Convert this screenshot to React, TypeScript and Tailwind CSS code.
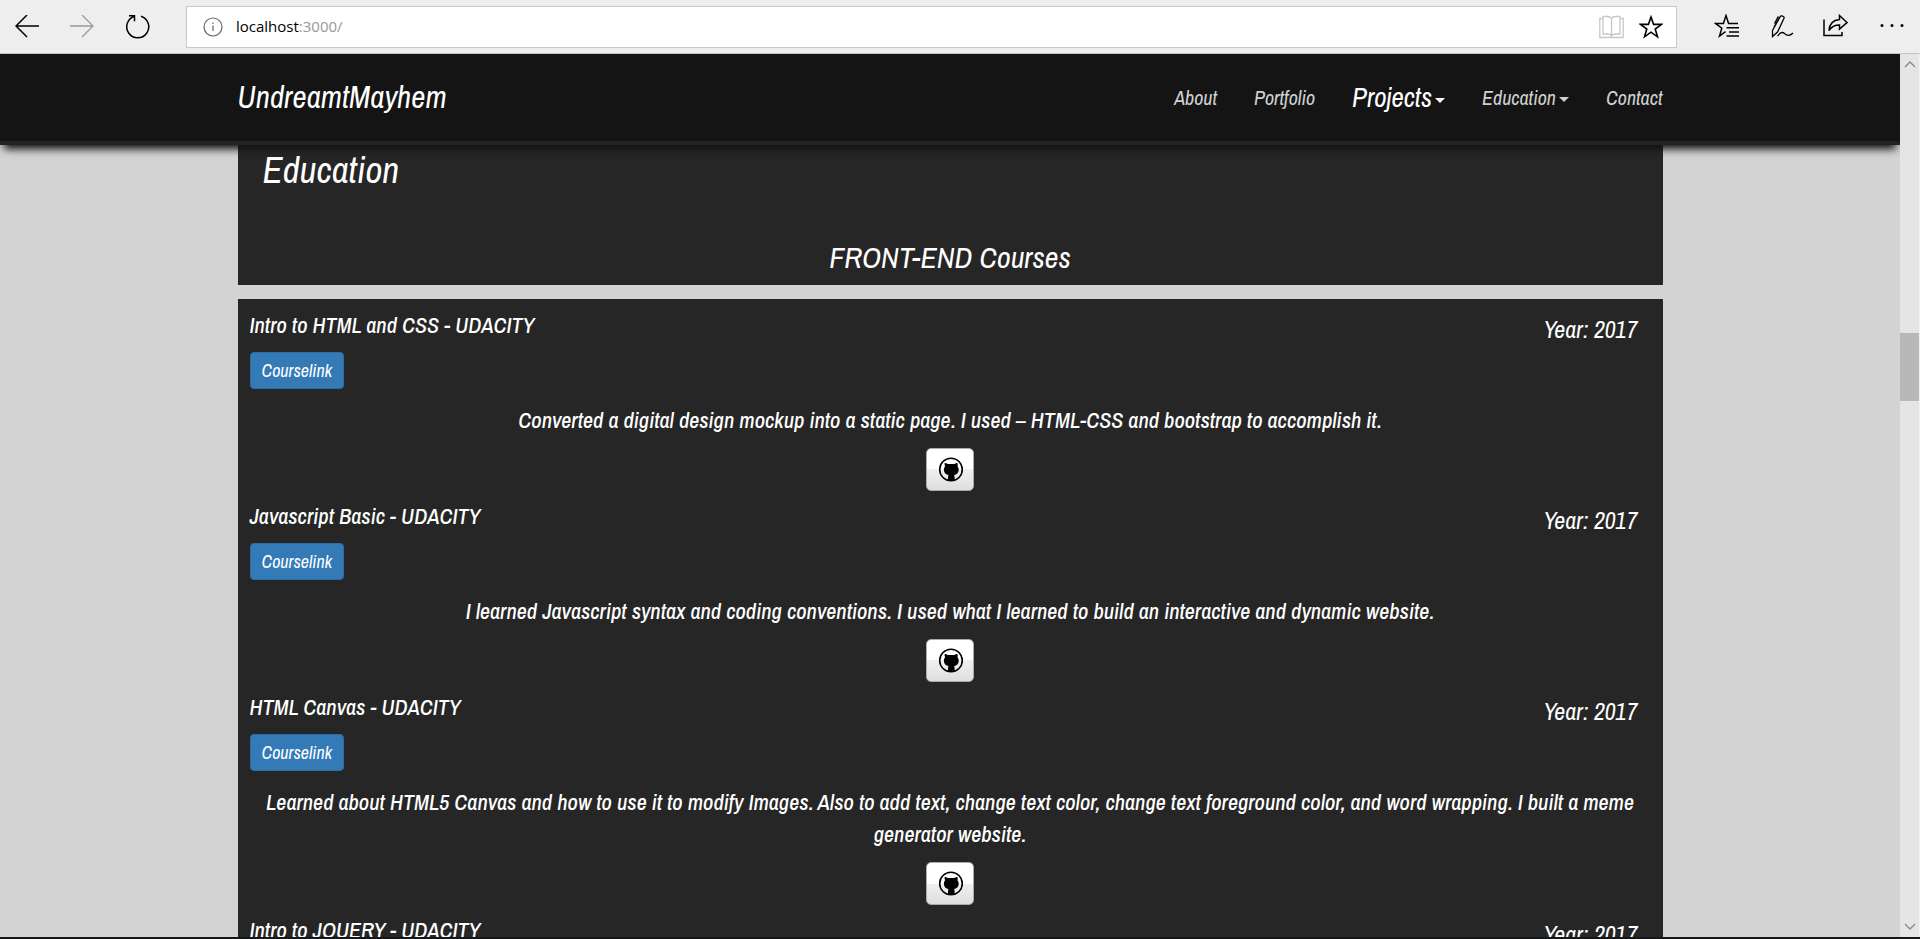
import React from "react";

const courses = [
  {
    title: "Intro to HTML and CSS - UDACITY",
    year: 2017,
    text: "Converted a digital design mockup into a static page. I used – HTML-CSS and bootstrap to accomplish it.",
  },
  {
    title: "Javascript Basic - UDACITY",
    year: 2017,
    text: "I learned Javascript syntax and coding conventions. I used what I learned to build an interactive and dynamic website.",
  },
  {
    title: "HTML Canvas - UDACITY",
    year: 2017,
    text: "Learned about HTML5 Canvas and how to use it to modify Images. Also to add text, change text color, change text foreground color, and word wrapping. I built a meme generator website.",
  },
  {
    title: "Intro to JQUERY - UDACITY",
    year: 2017,
    text: "",
  },
];

const line = { fill: "none", stroke: "currentColor" } as const;

function BrowserBar() {
  return (
    <header className="flex h-[54px] shrink-0 items-center border-b border-[#c3c3c3] bg-[#eeeeee] text-black">
      <button aria-label="Back" className="ml-[15px] size-6">
        <svg viewBox="0 0 24 24" {...line} strokeWidth="1.5"><path d="M24 11H1M12 0 1 11l11 11" /></svg>
      </button>
      <button aria-label="Forward" className="ml-[31px] size-6 text-[#999]">
        <svg viewBox="0 0 24 24" {...line} strokeWidth="1.3"><path d="M0 11h23M12 0l11 11-11 11" /></svg>
      </button>
      <button aria-label="Refresh" className="ml-8 size-6">
        <svg viewBox="0 0 24 24" {...line} strokeWidth="1.5"><path d="M15 1.300a11 11 0 1 1-6.500 0M3 .8h5.500v5.400" /></svg>
      </button>
      <div className="ml-9 flex h-[42px] flex-1 items-center border border-[#c8c8c8] bg-white">
        <svg className="ml-4 size-5 text-[#666]" viewBox="0 0 20 20" {...line} strokeWidth="1.2">
          <circle cx="10" cy="10" r="9" /><path d="M10 8.500V14M10 5.500V7" />
        </svg>
        <a href="#top" className="ml-[13px] flex-1 font-['Open_Sans',sans-serif] text-[15px] text-black">
          localhost<span className="text-[#999]">:3000/</span>
        </a>
        <button aria-label="Reading view" className="h-6 w-[25px] text-[#c8c8c8]">
          <svg viewBox="0 0 25 24" {...line} strokeWidth="1.3">
            <path d="M12.500 3.500Q11.500 1.500 8.500 1.500H4V19h4.500q3 0 4 2 1-2 4-2H21V1.500h-4.500q-3 0-4 2V21M4 3.500H.8V22.500h23.400V3.500H21" />
          </svg>
        </button>
        <button aria-label="Add to favorites" className="mr-[13px] ml-[15px] size-6">
          <svg viewBox="0 0 24 24" {...line} strokeWidth="1.6"><path d="m12 2 2.600 7.400H22.500L16.200 14l2.300 7.800L12 17.200l-6.500 4.600L7.800 14 1.500 9.400h7.900z" /></svg>
        </button>
      </div>
      <button aria-label="Favorites" className="ml-[37px] size-[25px]">
        <svg viewBox="0 0 25 25" {...line} strokeWidth="1.5">
          <path d="M24 9.400H14.600L12 1.500 9.400 9.400H1.500l6.300 4.800L5.500 22l6-4.300M12.500 13.800H25M15 18H25M12.500 22H25" />
        </svg>
      </button>
      <button aria-label="Add notes" className="ml-8 size-6">
        <svg viewBox="0 0 24 24" {...line} strokeWidth="1.300">
          <path d="M1.500 15.500 9 2c1-2 4.700-.8 4 1.300L6.500 17 1.500 21.500zM3 12l5.500-9.500L7 2 3.500 8.500M6.500 21c3-3.500 5-4.500 7-2.500s4.500 3.500 8.500-.5" />
        </svg>
      </button>
      <button aria-label="Share" className="ml-7 size-[25px]">
        <svg viewBox="0 0 25 25" {...line} strokeWidth="1.5">
          <path d="M1 5.500v16h18V18M16.500 1.500 24 8.500l-7.500 6.500v-4c-5 0-8 1.500-10.500 5.500C6.500 9.500 10.500 6 16.500 5.500z" />
        </svg>
      </button>
      <button aria-label="More" className="mr-4 ml-8 size-6">
        <svg viewBox="0 0 24 24" fill="currentColor"><circle cx="2" cy="10.500" r="1.500" /><circle cx="12" cy="10.500" r="1.500" /><circle cx="22" cy="10.500" r="1.500" /></svg>
      </button>
    </header>
  );
}

function Caret() {
  return <span className="ml-[3px] inline-block border-x-[5px] border-t-[5px] border-x-transparent align-middle" />;
}

function SiteNav() {
  return (
    <nav className="relative z-10 h-[91px] shrink-0 border-b-4 border-[#222] bg-[#141414] shadow-[0_8px_8px_-4px_#111]">
      <div className="mx-auto flex h-full w-3/4 items-center justify-between text-[20px] text-[#d0d0d0]">
        <a href="#top" className="text-[31px] text-white">UndreamtMayhem</a>
        <div className="flex items-center gap-[37px]">
          <a href="#about">About</a>
          <a href="#portfolio">Portfolio</a>
          <a href="#projects" className="text-[27px] text-white">Projects<Caret /></a>
          <a href="#education">Education<Caret /></a>
          <a href="#contact">Contact</a>
        </div>
      </div>
    </nav>
  );
}

function GithubMark() {
  return (
    <svg className="size-[25px]" viewBox="0 0 25 25">
      <circle cx="13" cy="12.500" r="11.300" fill="none" stroke="#000" strokeWidth="1.600" />
      <path d="M6.800 6c1.300 0 2.500.7 3.300 1.100 2-.3 4-.3 5.900 0C16.800 6.700 18 6 19.300 6c.5 1.200.5 2.200.2 3.200 1 1.200 1.300 2.400 1.200 3.800-.2 3.200-2 4.500-4.600 4.900.4.700.5 1.500.5 2.500V23c-2 .8-4.500.8-6.600 0v-2.600c0-1 .1-1.800.5-2.500-2.600-.4-4.500-1.700-4.600-4.900-.1-1.400.3-2.600 1.200-3.800-.3-1-.8-2-.3-3.200z" fill="#000" />
    </svg>
  );
}

function Course({ title, year, text }: (typeof courses)[number]) {
  return (
    <article className="px-3 pb-[9px]">
      <div className="flex h-8 justify-between">
        <h4 className="text-[22px] leading-8 font-medium">{title}</h4>
        <p className="mr-[13px] text-[24px] leading-10">Year: {year}</p>
      </div>
      <a href="#course" className="mt-[11px] flex h-[37px] w-fit items-center rounded-[4px] border border-[#2e6da4] bg-[#337ab7] px-[11px] text-[18px]">
        Courselink
      </a>
      <p className="mt-[15px] text-center text-[22px] leading-8 font-medium">{text}</p>
      <button aria-label="View on GitHub" className="mx-auto mt-3 flex h-[43px] w-12 items-center justify-center rounded-[5px] border border-[#aaa] bg-linear-to-b from-white from-50% via-[#f0f0f0] via-50% to-[#dedede]">
        <GithubMark />
      </button>
    </article>
  );
}

function ScrollBar() {
  return (
    <div className="flex w-5 shrink-0 flex-col items-center border-r border-[#f2f2f2] bg-[#e5e5e5] text-[#888]">
      <svg className="mt-1 h-3 w-3" viewBox="0 0 12 12" {...line} strokeWidth="1.300"><path d="m1 9 5-5 5 5" /></svg>
      <div className="mt-[263px] h-[68px] w-full bg-[#b8b8b8]" />
      <svg className="mt-auto mb-1 h-3 w-3" viewBox="0 0 12 12" {...line} strokeWidth="1.300"><path d="m1 3 5 5 5-5" /></svg>
    </div>
  );
}

export default function App() {
  return (
    <div className="flex h-screen flex-col overflow-hidden border-b-2 border-[#151618] bg-[#d3d3d3]">
      <BrowserBar />
      <div className="flex min-h-0 flex-1">
        <div className="flex min-w-0 flex-1 flex-col overflow-hidden font-['Archivo_Narrow','Liberation_Sans_Narrow','Arial_Narrow',sans-serif] text-white italic">
          <SiteNav />
          <main className="mx-auto w-3/4">
            <section className="bg-[#262626] pb-2">
              <h2 className="pl-[25px] text-[37px] leading-[50px]">Education</h2>
              <h3 className="mt-[42px] text-center text-[30px] leading-10">FRONT-END Courses</h3>
            </section>
            <section className="mt-[14px] bg-[#262626] pt-[10px]">
              {courses.map((c) => (
                <Course key={c.title} {...c} />
              ))}
            </section>
          </main>
        </div>
        <ScrollBar />
      </div>
    </div>
  );
}
